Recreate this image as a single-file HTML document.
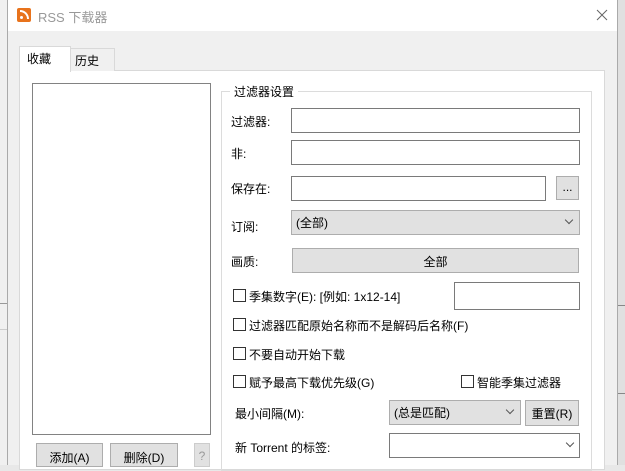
<!DOCTYPE html>
<html><head><meta charset="utf-8"><style>
*{box-sizing:border-box;margin:0;padding:0}
body{width:625px;height:465px;overflow:hidden;background:#e8e8e8;position:relative;font-family:"Liberation Sans","Noto Sans CJK SC",sans-serif;font-size:12px;color:#000}
.a{position:absolute}
.in{position:absolute;background:#fff;border:1px solid #7a7a7a}
.btn{position:absolute;background:#e1e1e1;border:1px solid #adadad;text-align:center}
.cb{position:absolute;width:13px;height:13px;border:1px solid #333;background:#fff}
.chev{position:absolute;width:6px;height:6px;border-right:1px solid #555;border-bottom:1px solid #555;transform:rotate(45deg)}
</style></head><body>
<div class="a" style="left:0;top:0;width:8px;height:465px;background:#f0f0f0"></div>
<div class="a" style="left:0;top:303px;width:8px;height:1px;background:#999"></div>
<div class="a" style="left:0;top:329px;width:8px;height:1px;background:#ccc"></div>
<div class="a" style="left:617px;top:0;width:8px;height:465px;background:#e0e0e0"></div>
<div class="a" style="left:617px;top:305px;width:8px;height:1px;background:#888"></div>
<div class="a" style="left:617px;top:393px;width:8px;height:1px;background:#888"></div>
<div class="a" style="left:7px;top:0;width:611px;height:465px;background:#f0f0f0;border-left:1px solid #aaa;border-right:1px solid #aaa"></div>
<div class="a" style="left:8px;top:0;width:609px;height:31px;background:#fff"></div>
<div class="a" style="left:17px;top:8px;width:14px;height:14px;background:#e8731c;border-radius:2px"></div>
<div class="a" style="left:20px;top:16px;width:3px;height:3px;background:#fff;border-radius:50%"></div>
<div class="a" style="left:20px;top:10px;width:9px;height:9px;border:2px solid #fff;border-left:none;border-bottom:none;border-radius:0 9px 0 0"></div>
<div class="a" style="left:38px;top:7px;color:#999;font-size:13px">RSS 下载器</div>
<svg class="a" style="left:596px;top:9px" width="12" height="12"><path d="M1 1L11 11M11 1L1 11" stroke="#666" stroke-width="1"/></svg>
<div class="a" style="left:19px;top:70px;width:586px;height:400px;background:#fff;border:1px solid #d9d9d9"></div>
<div class="a" style="left:70px;top:48px;width:45px;height:23px;background:#f0f0f0;border:1px solid #d9d9d9;border-bottom:none;padding:3px 0 0 4px">历史</div>
<div class="a" style="left:19px;top:46px;width:52px;height:26px;background:#fff;border:1px solid #d9d9d9;border-bottom:none;padding:3px 0 0 7px">收藏</div>
<div class="in" style="left:32px;top:83px;width:179px;height:352px;border-color:#828282"></div>
<div class="btn" style="left:36px;top:443px;width:67px;height:24px;padding-top:5px">添加(A)</div>
<div class="btn" style="left:110px;top:443px;width:68px;height:24px;padding-top:5px">删除(D)</div>
<div class="btn" style="left:194px;top:443px;width:16px;height:24px;padding-top:5px;color:#999;border-color:#ccc">?</div>
<div class="a" style="left:221px;top:91px;width:371px;height:380px;border:1px solid #dcdcdc"></div>
<div class="a" style="left:230px;top:83px;background:#fff;padding:0 4px">过滤器设置</div>
<div class="a" style="left:231px;top:113px">过滤器:</div>
<div class="in" style="left:291px;top:108px;width:289px;height:25px"></div>
<div class="a" style="left:231px;top:145px">非:</div>
<div class="in" style="left:291px;top:140px;width:289px;height:25px"></div>
<div class="a" style="left:231px;top:180px">保存在:</div>
<div class="in" style="left:291px;top:176px;width:255px;height:25px"></div>
<div class="btn" style="left:556px;top:176px;width:23px;height:24px;padding-top:3px">...</div>
<div class="a" style="left:231px;top:218px">订阅:</div>
<div class="btn" style="left:291px;top:210px;width:289px;height:25px;text-align:left;padding:3px 0 0 4px">(全部)</div>
<div class="chev" style="left:566px;top:217px"></div>
<div class="a" style="left:231px;top:253px">画质:</div>
<div class="btn" style="left:292px;top:248px;width:287px;height:25px;padding-top:4px">全部</div>
<div class="cb" style="left:233px;top:289px"></div><div class="a" style="left:249px;top:288px">季集数字(E): [例如: 1x12-14]</div>
<div class="in" style="left:454px;top:282px;width:126px;height:28px"></div>
<div class="cb" style="left:233px;top:318px"></div><div class="a" style="left:249px;top:317px">过滤器匹配原始名称而不是解码后名称(F)</div>
<div class="cb" style="left:233px;top:347px"></div><div class="a" style="left:249px;top:346px">不要自动开始下载</div>
<div class="cb" style="left:233px;top:375px"></div><div class="a" style="left:249px;top:374px">赋予最高下载优先级(G)</div>
<div class="cb" style="left:461px;top:375px"></div><div class="a" style="left:477px;top:374px">智能季集过滤器</div>
<div class="a" style="left:235px;top:405px">最小间隔(M):</div>
<div class="btn" style="left:389px;top:400px;width:132px;height:25px;text-align:left;padding:3px 0 0 4px">(总是匹配)</div>
<div class="chev" style="left:507px;top:407px"></div>
<div class="btn" style="left:525px;top:400px;width:54px;height:26px;padding-top:4px">重置(R)</div>
<div class="a" style="left:235px;top:439px">新 Torrent 的标签:</div>
<div class="in" style="left:389px;top:433px;width:191px;height:25px"></div>
<div class="chev" style="left:567px;top:440px"></div>
</body></html>
